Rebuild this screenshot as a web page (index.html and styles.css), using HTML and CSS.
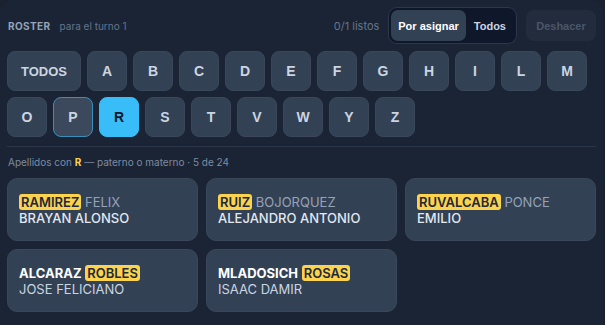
FILE: index.html
```html
<!DOCTYPE html>
<html lang="es">
<head>
<meta charset="UTF-8">
<meta name="viewport" content="width=device-width, initial-scale=1.0">
<title>Roster</title>
<link rel="stylesheet" href="styles.css">
</head>
<body>
  <div class="panel">
    <div class="header">
      <div class="title">
        <span class="roster">ROSTER</span>
        <span class="turn">para el turno 1</span>
      </div>
      <div class="actions">
        <span class="ready">0/1 listos</span>
        <div class="segmented">
          <button class="seg active">Por asignar</button>
          <button class="seg">Todos</button>
        </div>
        <button class="undo" disabled>Deshacer</button>
      </div>
    </div>

    <div class="letters">
      <button class="letter wide">TODOS</button>
      <button class="letter">A</button>
      <button class="letter">B</button>
      <button class="letter">C</button>
      <button class="letter">D</button>
      <button class="letter">E</button>
      <button class="letter">F</button>
      <button class="letter">G</button>
      <button class="letter">H</button>
      <button class="letter">I</button>
      <button class="letter">L</button>
      <button class="letter">M</button>
      <button class="letter">O</button>
      <button class="letter hover">P</button>
      <button class="letter selected">R</button>
      <button class="letter">S</button>
      <button class="letter">T</button>
      <button class="letter">V</button>
      <button class="letter">W</button>
      <button class="letter">Y</button>
      <button class="letter">Z</button>
    </div>

    <div class="divider"></div>

    <p class="caption">Apellidos con <b>R</b> — paterno o materno · 5 de 24</p>

    <div class="cards">
      <div class="card">
        <div class="surname"><mark>RAMIREZ</mark> <span class="dim">FELIX</span></div>
        <div class="given strong">BRAYAN ALONSO</div>
      </div>
      <div class="card">
        <div class="surname"><mark>RUIZ</mark> <span class="dim">BOJORQUEZ</span></div>
        <div class="given strong">ALEJANDRO ANTONIO</div>
      </div>
      <div class="card">
        <div class="surname"><mark>RUVALCABA</mark> <span class="dim">PONCE</span></div>
        <div class="given strong">EMILIO</div>
      </div>
      <div class="card">
        <div class="surname"><span class="bold">ALCARAZ</span> <mark>ROBLES</mark></div>
        <div class="given">JOSE FELICIANO</div>
      </div>
      <div class="card">
        <div class="surname"><span class="bold">MLADOSICH</span> <mark>ROSAS</mark></div>
        <div class="given">ISAAC DAMIR</div>
      </div>
    </div>
  </div>
</body>
</html>
```

FILE: styles.css
```css
* {
  margin: 0;
  padding: 0;
  box-sizing: border-box;
}

html, body {
  height: 100%;
}

body {
  background: #1a2130;
  font-family: "Inter", "Noto Sans", sans-serif;
  color: #cbd5e1;
}

.panel {
  width: 603px;
  height: 100%;
  background: #1b2434;
  border-radius: 12px 12px 0 0;
  padding: 7px 7px 0 7px;
}

.header {
  display: flex;
  justify-content: space-between;
  align-items: center;
  height: 37px;
  padding-left: 1px;
}

.title {
  display: flex;
  align-items: baseline;
  gap: 9px;
}

.roster {
  font-size: 10px;
  font-weight: 700;
  letter-spacing: 0.04em;
  color: #94a3b8;
}

.turn {
  font-size: 10px;
  color: #64748b;
}

.actions {
  display: flex;
  align-items: center;
  gap: 9px;
}

.ready {
  font-size: 11px;
  color: #64748b;
}

.segmented {
  display: flex;
  height: 37px;
  padding: 2px;
  background: #0f172a;
  border: 1px solid #2b374b;
  border-radius: 9px;
}

.seg {
  font-family: "Liberation Sans", Arial, sans-serif;
  font-size: 11px;
  font-weight: 700;
  white-space: nowrap;
  border: none;
  background: transparent;
  color: #cbd5e1;
  padding: 0 8px;
  border-radius: 7px;
}

.seg.active {
  padding: 0 7px;
  background: #334155;
  color: #ffffff;
}

.undo {
  font-family: "Liberation Sans", Arial, sans-serif;
  font-size: 11px;
  font-weight: 700;
  height: 31px;
  width: 70px;
  border: none;
  border-radius: 8px;
  background: #222c3d;
  color: #4b5669;
}

.letters {
  display: flex;
  flex-wrap: wrap;
  gap: 6px;
  margin-top: 7px;
}

.letter {
  font-family: "Liberation Sans", Arial, sans-serif;
  font-size: 14px;
  font-weight: 700;
  width: 40px;
  height: 40px;
  border: 1px solid #3a475b;
  border-radius: 8px;
  background: #334155;
  color: #cbd5e1;
}

.letter.wide {
  width: 74px;
  font-size: 13px;
}

.letter.hover {
  background: #3c495d;
  border-color: #3a8fba;
}

.letter.selected {
  background: #38bdf8;
  border-color: #38bdf8;
  color: #0f172a;
}

.divider {
  height: 1px;
  background: #2a3547;
  margin-top: 9px;
}

.caption {
  font-size: 10px;
  line-height: 14px;
  color: #7d8ba1;
  margin-top: 8px;
  padding-left: 1px;
}

.caption b {
  color: #fcd34d;
  font-weight: 700;
}

.cards {
  display: grid;
  grid-template-columns: repeat(3, 1fr);
  gap: 8px;
  margin-top: 9px;
}

.card {
  height: 63px;
  background: #334155;
  border: 1px solid #3a475b;
  border-radius: 10px;
  padding: 0 11px;
  display: flex;
  flex-direction: column;
  justify-content: center;
  font-size: 13px;
  line-height: 16px;
}

.surname {
  white-space: nowrap;
}

mark {
  background: #fcd34d;
  color: #1e293b;
  font-weight: 600;
  border-radius: 3px;
  padding: 0 2px;
}

.dim {
  color: #94a3b8;
}

.bold {
  font-weight: 700;
  color: #ffffff;
}

.given {
  color: #cbd5e1;
}

.given.strong {
  font-weight: 500;
  color: #e2e8f0;
}
```
